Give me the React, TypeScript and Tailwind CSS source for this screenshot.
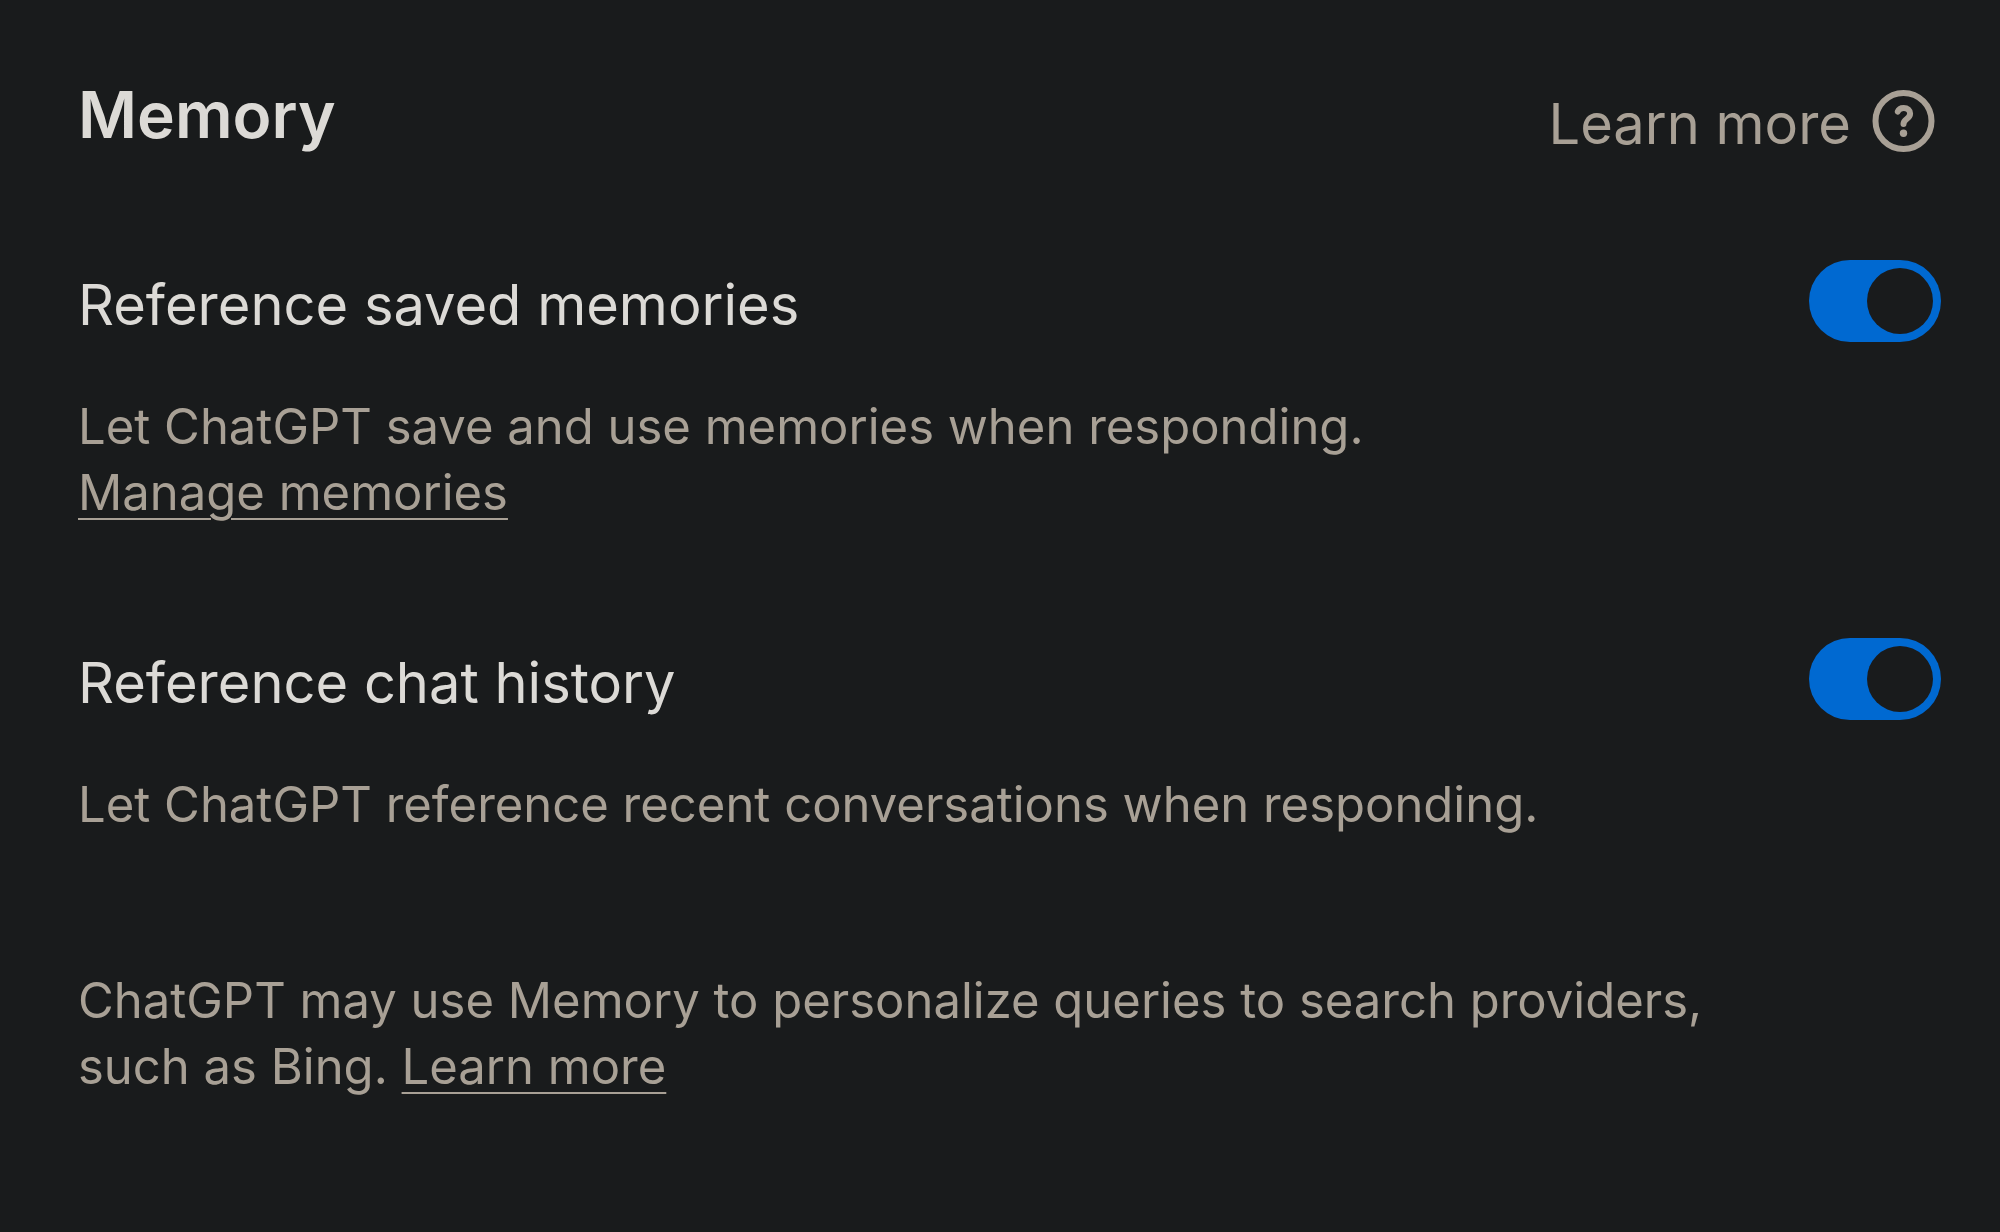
import { useState } from "react";

interface SettingRowProps {
  id: string;
  title: string;
  description: string;
  link?: string;
}

function HelpIcon() {
  return (
    <svg viewBox="0 0 74 74" fill="none" className="size-[74px] shrink-0" aria-hidden="true">
      <circle cx="36.500" cy="37" r="28" stroke="currentColor" strokeWidth="6" />
      <path
        d="M30.800 27.600C31.600 25.300 33.900 24 36.700 24c3.700 0 6.400 2.300 6.400 5.600 0 2.600-1.500 4-3.300 5.300-2.200 1.600-3.300 2.700-3.300 5.200"
        stroke="currentColor"
        strokeWidth="6"
        strokeLinecap="round"
        strokeLinejoin="round"
      />
      <circle cx="36.500" cy="49.300" r="3.700" fill="currentColor" />
    </svg>
  );
}

function SettingRow({ id, title, description, link }: SettingRowProps) {
  const [enabled, setEnabled] = useState(true);

  return (
    <section>
      <div className="flex items-start justify-between">
        <label htmlFor={id} className="text-[56px] leading-[90px] text-[#dcdad6]">
          {title}
        </label>
        <button
          id={id}
          type="button"
          role="switch"
          aria-checked={enabled}
          onClick={() => setEnabled(!enabled)}
          className={`flex h-[82px] w-[132px] shrink-0 cursor-pointer items-center rounded-full p-2 ${
            enabled ? "justify-end bg-[#0069d1]" : "justify-start bg-[#4b4f52]"
          }`}
        >
          <span className="size-[66px] rounded-full bg-[#191b1c]" />
        </button>
      </div>
      <p className="mt-11 text-[49px] leading-[66px] text-[#a8a095]">
        {description}
        {link && (
          <a href="#manage" className="block w-fit underline decoration-2 underline-offset-8">
            {link}
          </a>
        )}
      </p>
    </section>
  );
}

export default function App() {
  return (
    <main className="min-h-screen bg-[#191b1c] pt-[72px] pr-[59px] pl-[78px] font-['Inter',sans-serif]">
      <header className="flex items-start justify-between">
        <h1 className="text-[64px] leading-[86px] font-semibold text-[#dcdad6]">Memory</h1>
        <a href="#learn" className="mt-3 flex items-start gap-4 text-[56px] leading-[80px] text-[#a8a095]">
          Learn more
          <HelpIcon />
        </a>
      </header>

      {/* Memory toggles */}
      <div className="mt-24 flex flex-col gap-28">
        <SettingRow
          id="saved-memories"
          title="Reference saved memories"
          description="Let ChatGPT save and use memories when responding."
          link="Manage memories"
        />
        <SettingRow
          id="chat-history"
          title="Reference chat history"
          description="Let ChatGPT reference recent conversations when responding."
        />
      </div>

      <p className="mt-[130px] text-[49px] leading-[66px] text-[#a8a095]">
        ChatGPT may use Memory to personalize queries to search providers,
        <br />
        such as Bing.{" "}
        <a href="#search" className="underline decoration-2 underline-offset-8">
          Learn more
        </a>
      </p>
    </main>
  );
}
